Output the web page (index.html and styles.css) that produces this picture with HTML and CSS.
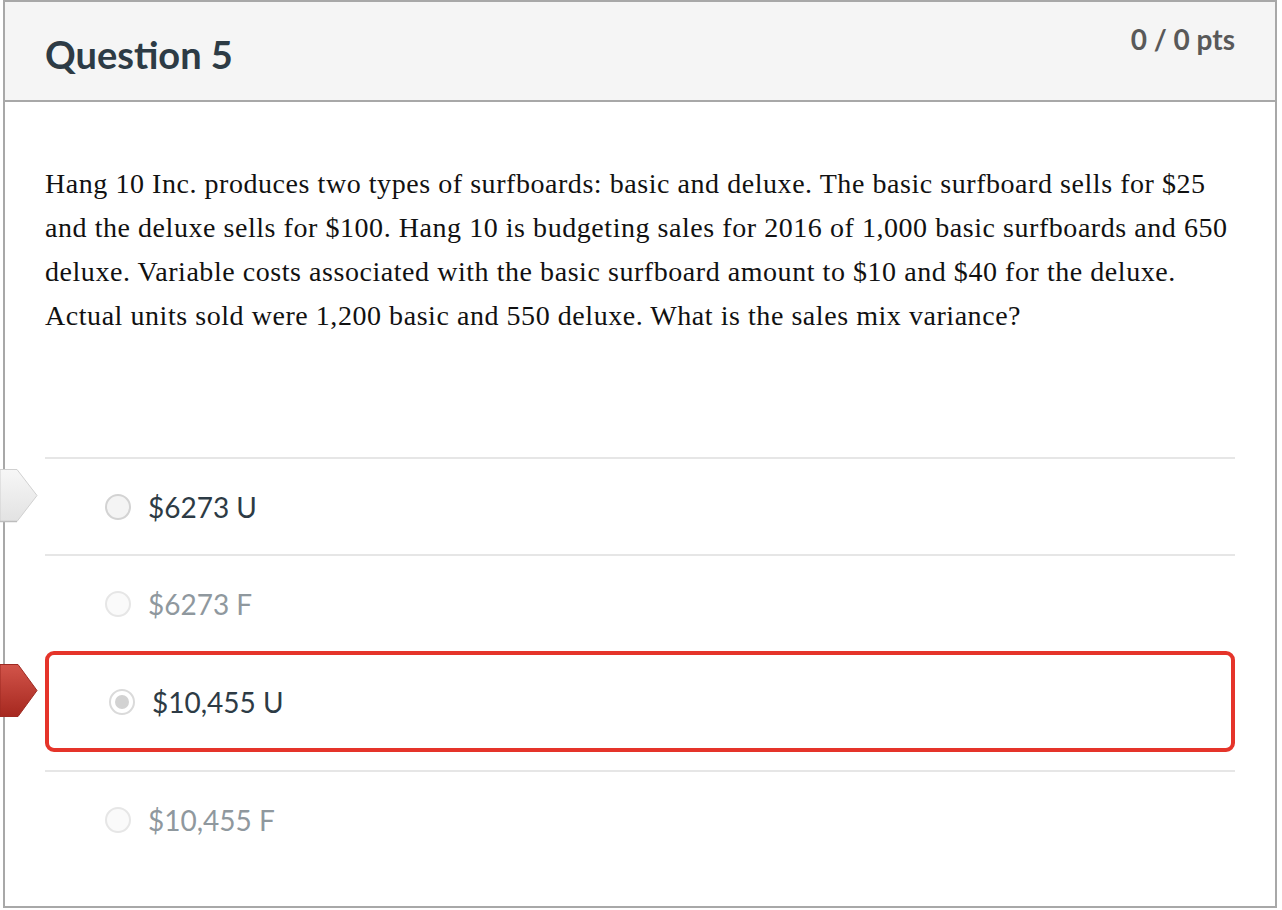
FILE: index.html
```html
<!DOCTYPE html>
<html lang="en">
<head>
<meta charset="utf-8">
<title>Question 5</title>
<link rel="stylesheet" href="styles.css">
</head>
<body>
<div class="question">
  <div class="q-header">
    <h2 class="q-title">Question 5</h2>
    <div class="q-points">0 / 0 pts</div>
  </div>
  <div class="q-body">
    <p class="q-text">Hang 10 Inc. produces two types of surfboards: basic and deluxe. The basic surfboard sells for $25 and the deluxe sells for $100. Hang 10 is budgeting sales for 2016 of 1,000 basic surfboards and 650 deluxe. Variable costs associated with the basic surfboard amount to $10 and $40 for the deluxe. Actual units sold were 1,200 basic and 550 deluxe. What is the sales mix variance?</p>
    <div class="answers">
      <div class="answer">
        <svg class="marker" width="38" height="54" viewBox="0 0 38 54">
          <defs>
            <linearGradient id="gw" x1="0" y1="0" x2="0" y2="1">
              <stop offset="0" stop-color="#f7f7f7"/>
              <stop offset="1" stop-color="#e2e2e2"/>
            </linearGradient>
          </defs>
          <polygon points="0,0.5 17,0.5 37,26.5 17,52.5 0,52.5" fill="url(#gw)" stroke="#d0d0d0" stroke-width="1"/>
          <line x1="0" y1="52.5" x2="17" y2="52.5" stroke="#bdbdbd" stroke-width="1.5"/>
        </svg>
        <span class="radio"></span>
        <span class="label">$6273 U</span>
      </div>
      <div class="answer faded">
        <span class="radio"></span>
        <span class="label">$6273 F</span>
      </div>
      <div class="answer-wrap">
        <svg class="marker marker-red" width="38" height="54" viewBox="0 0 38 54">
          <defs>
            <linearGradient id="gr" x1="0" y1="0" x2="0" y2="1">
              <stop offset="0" stop-color="#d2544a"/>
              <stop offset="1" stop-color="#a6281f"/>
            </linearGradient>
          </defs>
          <polygon points="0,0.5 18,0.5 37,26.5 18,52.5 0,52.5" fill="url(#gr)" stroke="#9e2a22" stroke-width="1"/>
        </svg>
        <div class="answer selected">
          <span class="radio checked"></span>
          <span class="label">$10,455 U</span>
        </div>
      </div>
      <div class="answer faded">
        <span class="radio"></span>
        <span class="label">$10,455 F</span>
      </div>
    </div>
  </div>
</div>
</body>
</html>
```

FILE: styles.css
```css
html, body {
  margin: 0;
  padding: 0;
  background: #ffffff;
}

.question {
  position: relative;
  margin-left: 3px;
  width: 1270px;
  height: 904px;
  border: 2px solid #a8a8a8;
  background: #ffffff;
}

.q-header {
  display: flex;
  justify-content: space-between;
  align-items: flex-start;
  height: 98px;
  padding: 0 40px;
  background: #f5f5f5;
  border-bottom: 2px solid #a8a8a8;
}

.q-title {
  margin: 30px 0 0 0;
  font-family: Lato, "Open Sans", sans-serif;
  font-weight: 700;
  font-size: 38px;
  line-height: 44px;
  color: #2d3b45;
}

.q-points {
  margin-top: 20px;
  font-family: Lato, "Open Sans", sans-serif;
  font-weight: 700;
  font-size: 28px;
  line-height: 34px;
  color: #595959;
}

.q-body {
  padding: 60px 40px 0 40px;
}

.q-text {
  margin: 0;
  font-family: "Liberation Serif", "Times New Roman", serif;
  font-size: 28px;
  letter-spacing: 0.55px;
  line-height: 44px;
  color: #111111;
}

.answers {
  margin-top: 119px;
}

.answer {
  position: relative;
  display: flex;
  align-items: center;
  height: 95px;
  padding-left: 60px;
  border-top: 2px solid #e6e6e6;
  font-family: Lato, "Open Sans", sans-serif;
  font-size: 28px;
  color: #2d3b45;
}

.answer .label {
  margin-left: 17px;
}

.answer.faded {
  color: #8f989e;
}

.answer-wrap {
  position: relative;
  padding-bottom: 18px;
}

.answer.selected {
  height: 93px;
  border: 4px solid #e5342a;
  border-radius: 9px;
}

.radio {
  box-sizing: border-box;
  display: inline-block;
  width: 26px;
  height: 26px;
  border: 2px solid #d3d3d3;
  border-radius: 50%;
  background: #f4f4f4;
  flex-shrink: 0;
}

.faded .radio {
  border-color: #e6e6e6;
  background: #fafafa;
}

.radio.checked {
  position: relative;
  border-color: #dadada;
  background: #ffffff;
}

.radio.checked::after {
  content: "";
  position: absolute;
  left: 4px;
  top: 4px;
  width: 14px;
  height: 14px;
  border-radius: 50%;
  background: #d2d2d2;
}

.marker {
  position: absolute;
  left: -45px;
  top: 10px;
  display: block;
}

.marker-red {
  top: 13px;
}
```
